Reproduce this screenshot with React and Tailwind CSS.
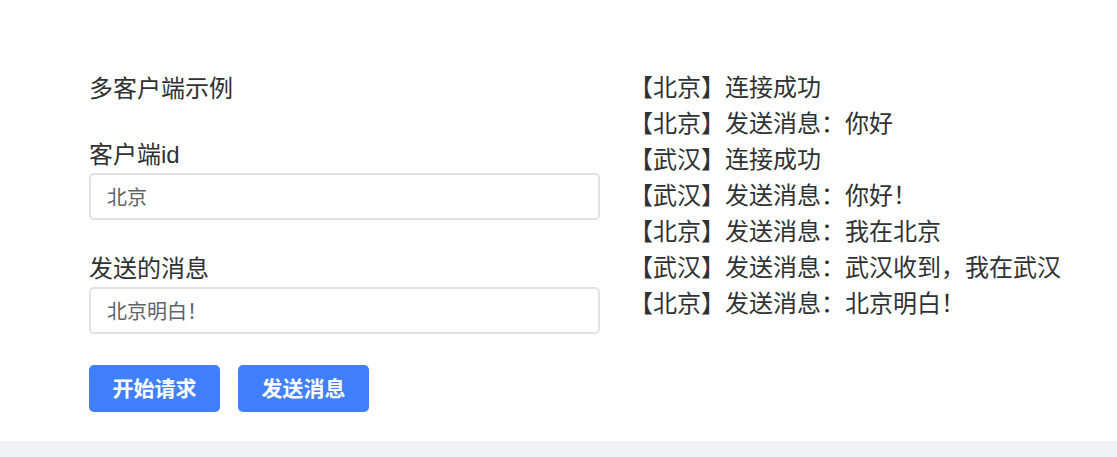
import React, { useState } from 'react';

const logs = [
  '【北京】连接成功',
  '【北京】发送消息：你好',
  '【武汉】连接成功',
  '【武汉】发送消息：你好！',
  '【北京】发送消息：我在北京',
  '【武汉】发送消息：武汉收到，我在武汉',
  '【北京】发送消息：北京明白！',
];

const App = () => {
  const [clientId, setClientId] = useState('北京');
  const [message, setMessage] = useState('北京明白！');

  return (
    <div
      className="min-h-screen bg-[#f0f2f5]"
      style={{ fontFamily: '"Liberation Sans", "Noto Sans CJK SC", sans-serif' }}
    >
      {/* Main panel */}
      <div className="h-[443px] bg-white border-b border-[#e4e7ed] pl-[89px] pt-[70px] flex">
        {/* Left: form */}
        <div className="w-[511px] shrink-0 text-[#303133]">
          <div className="text-[24px] leading-[36px] pt-px">多客户端示例</div>

          <div className="mt-[30px]">
            <div className="text-[24px] leading-[36px]">客户端id</div>
            <input
              value={clientId}
              onChange={(e) => setClientId(e.target.value)}
              className="block w-full h-[47px] px-4 text-[20px] text-[#606266] border-2 border-[#e0e2e8] rounded-[5px] outline-none"
            />
          </div>

          <div className="mt-[31px]">
            <div className="text-[24px] leading-[36px]">发送的消息</div>
            <input
              value={message}
              onChange={(e) => setMessage(e.target.value)}
              className="block w-full h-[47px] px-4 text-[20px] text-[#606266] border-2 border-[#e0e2e8] rounded-[5px] outline-none"
            />
          </div>

          <div className="mt-[31px] flex gap-[18px]">
            <button className="w-[131px] h-[47px] bg-[#4080ff] text-white text-[21px] font-bold rounded-[5px]">
              开始请求
            </button>
            <button className="w-[131px] h-[47px] bg-[#4080ff] text-white text-[21px] font-bold rounded-[5px]">
              发送消息
            </button>
          </div>
        </div>

        {/* Right: log */}
        <div className="ml-[29px] text-[24px] leading-[36px] text-[#303133]">
          {logs.map((line, i) => (
            <div key={i}>{line}</div>
          ))}
        </div>
      </div>
    </div>
  );
};

export default App;
